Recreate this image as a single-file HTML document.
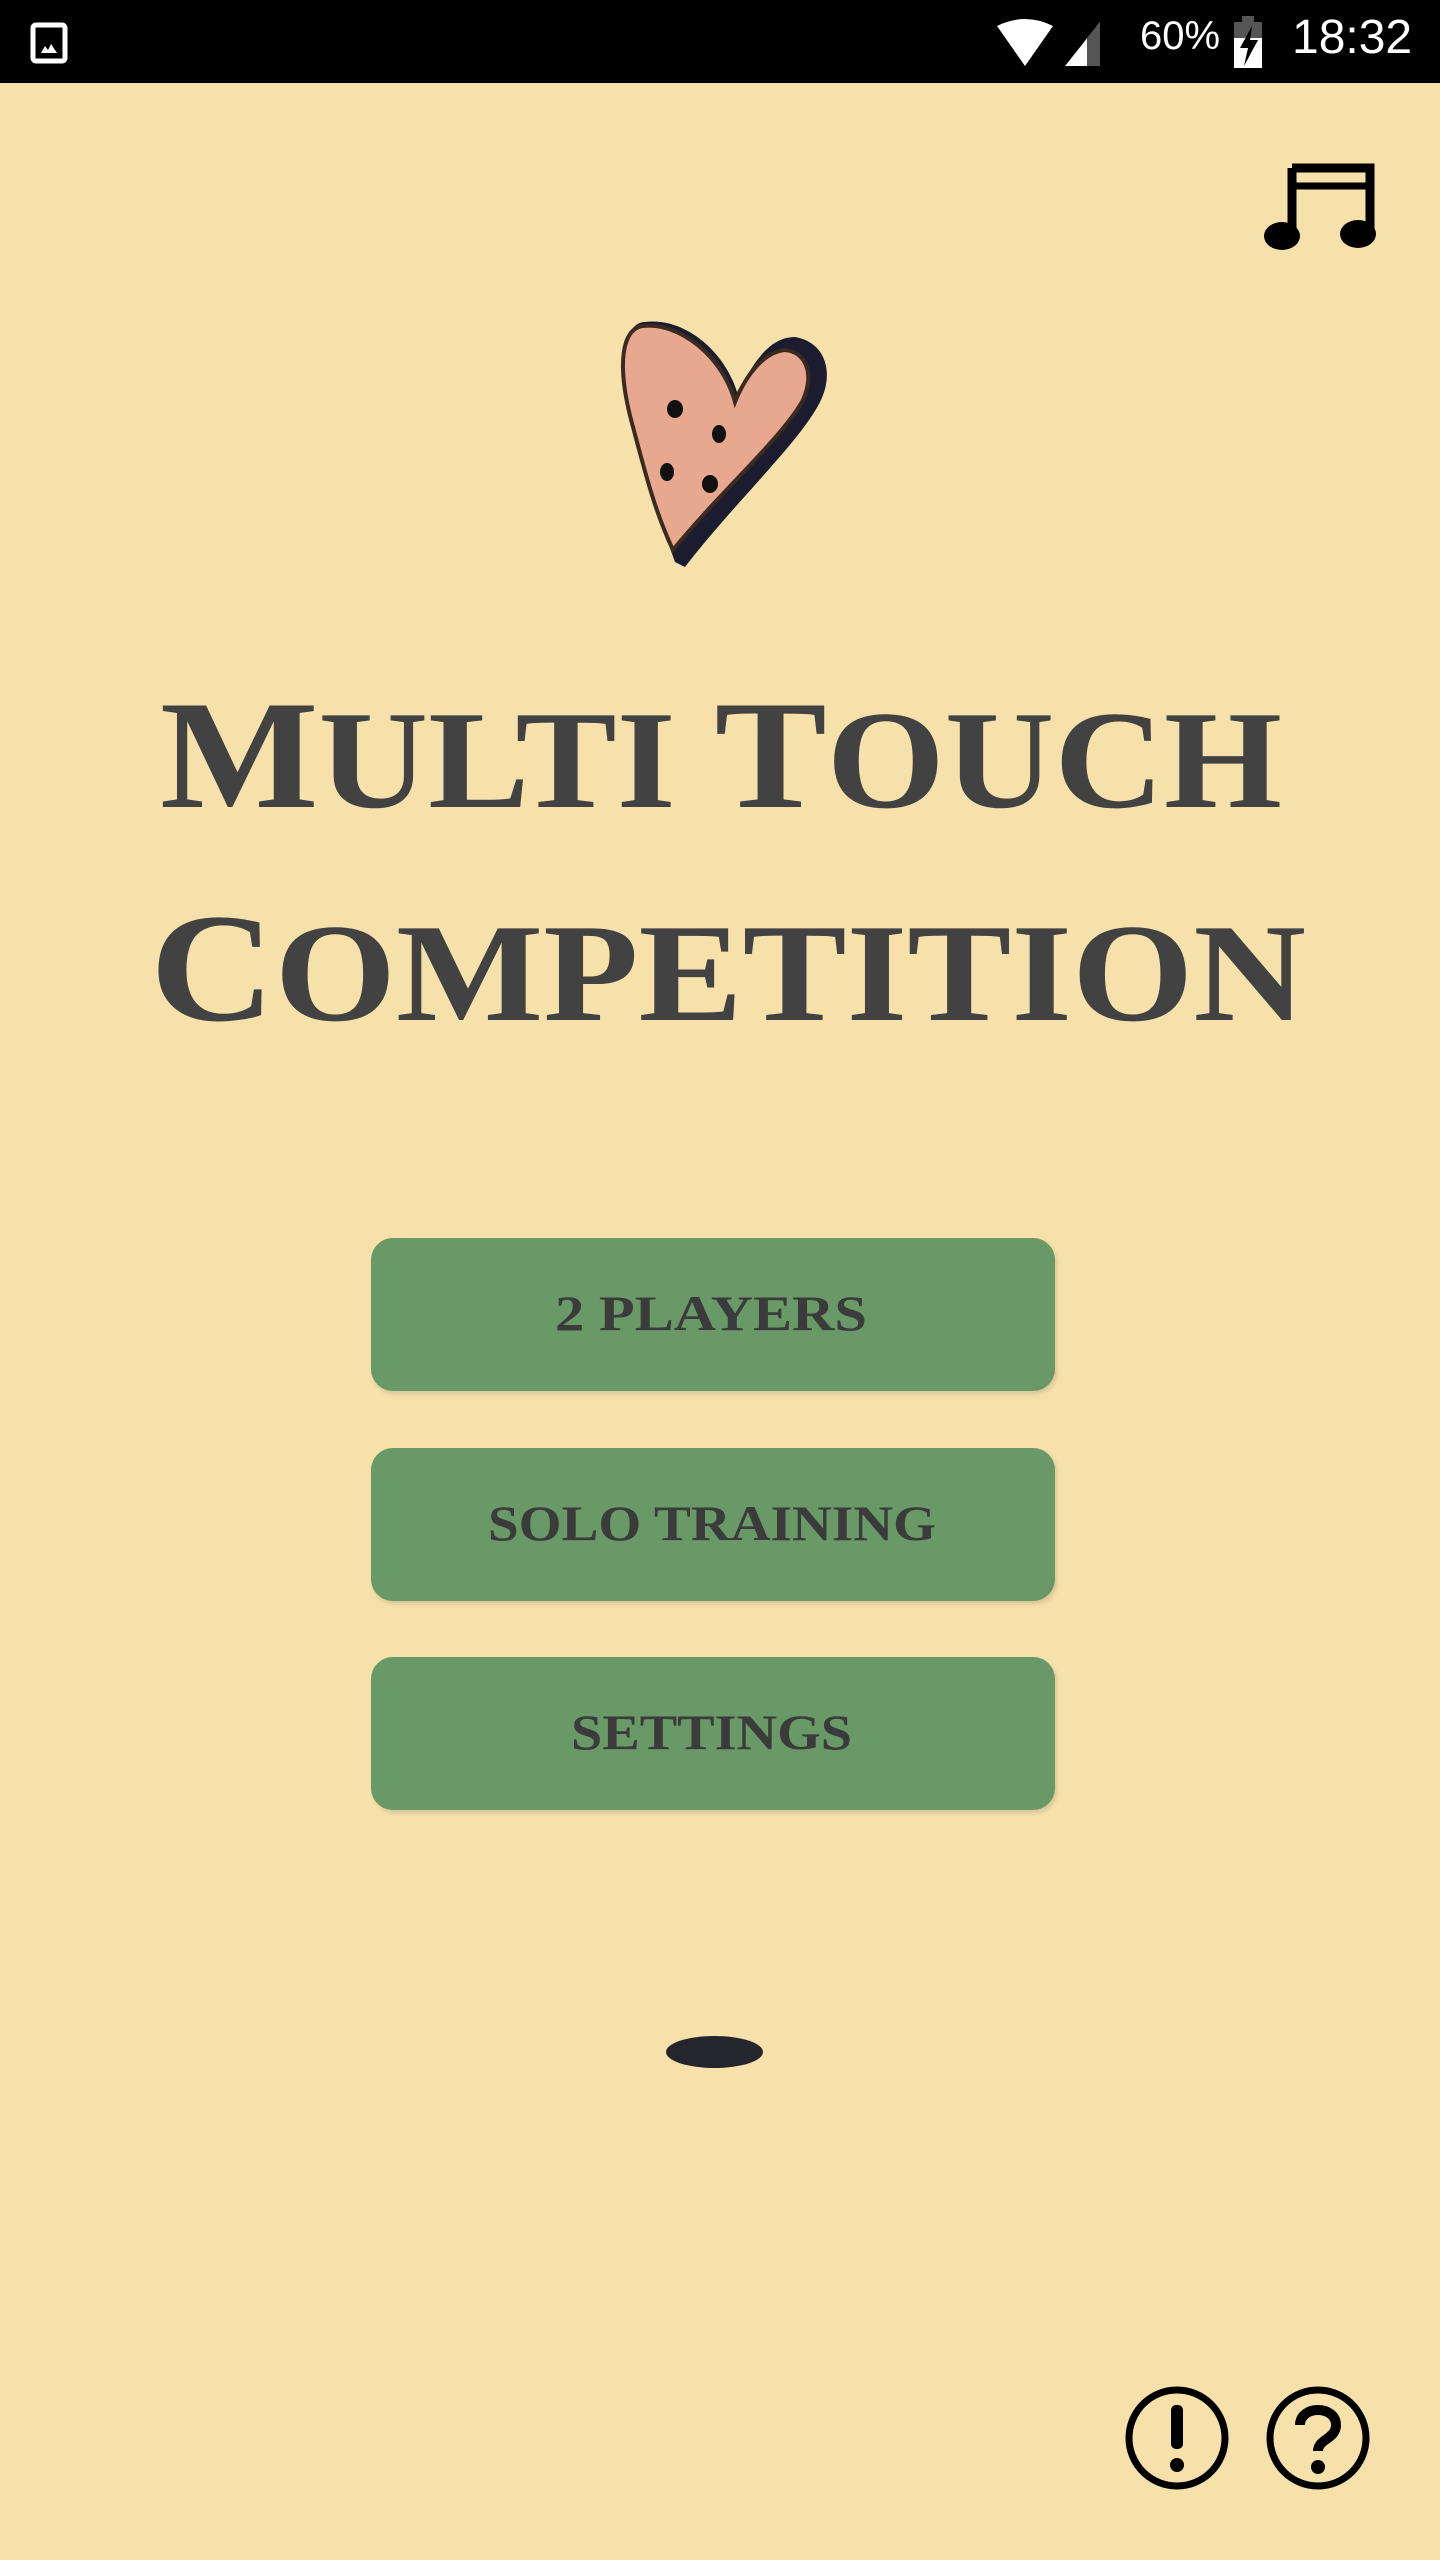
<!DOCTYPE html>
<html><head><meta charset="utf-8"><style>
html,body{margin:0;padding:0}
body{width:1440px;height:2560px;background:#f6e1ab;position:relative;overflow:hidden;font-family:"Liberation Serif",serif}
.sb{position:absolute;left:0;top:0;width:1440px;height:83px;background:#000}
.abs{position:absolute}
.btn{position:absolute;left:371px;width:684px;height:153px;background:#689966;border-radius:22px;box-shadow:2px 3px 4px rgba(0,0,0,0.12)}
</style></head><body>
<div class="sb">
<svg class="abs" style="left:30px;top:22px" width="40" height="42" viewBox="0 0 40 42"><rect x="3" y="3" width="32" height="36" rx="3" fill="none" stroke="#fff" stroke-width="5"/><path d="M11 31 L15 24 L18 28 L21 22 L27 31 Z" fill="#fff"/></svg>
<svg class="abs" style="left:995px;top:18px" width="120" height="50" viewBox="0 0 120 50"><path d="M2 8 Q30 -6 58 8 L30 48 Z" fill="#fff"/><path d="M70 48 L105 4 L105 48 Z" fill="#fff"/><path d="M92 20 L105 4 L105 48 L92 48 Z" fill="#555"/></svg>
<div class="abs" style="left:1140px;top:14px;color:#fff;font:40px 'Liberation Sans',sans-serif">60%</div>
<svg class="abs" style="left:1232px;top:16px" width="34" height="52" viewBox="0 0 34 52"><rect x="10" y="0" width="12" height="6" fill="#555"/><rect x="2" y="6" width="28" height="16" fill="#555"/><rect x="2" y="22" width="28" height="30" fill="#fff"/><path d="M20 10 L8 32 L16 32 L12 50 L26 24 L18 24 Z" fill="#000"/></svg>
<div class="abs" style="left:1292px;top:10px;color:#fff;font:48px 'Liberation Sans',sans-serif">18:32</div>
</div>
<svg class="abs" style="left:1262px;top:160px" width="114" height="94" viewBox="0 0 114 94"><path d="M30 8 L108 8 L108 72" fill="none" stroke="#000" stroke-width="9"/><path d="M30 8 L30 76" stroke="#000" stroke-width="9"/><path d="M34 26 L104 26" stroke="#000" stroke-width="7"/><ellipse cx="20" cy="76" rx="18" ry="14" fill="#000"/><ellipse cx="96" cy="74" rx="18" ry="14" fill="#000"/></svg>
<svg class="abs" style="left:615px;top:312px" width="235" height="265" viewBox="0 0 235 265">
<path d="M30 10 C10 10 -2 50 20 120 C35 170 45 210 60 250 L70 255 C120 190 185 130 205 90 C220 60 210 30 180 25 C150 25 135 60 122 80 C110 40 70 5 30 10 Z" fill="#1c1c30"/>
<path d="M28 14 C8 16 0 50 18 115 C30 160 40 200 58 238 C105 180 168 125 188 88 C200 60 190 40 170 38 C148 40 130 65 120 90 C108 45 65 10 28 14 Z" fill="#e8a890" stroke="#3a2a20" stroke-width="4"/>
<ellipse cx="60" cy="97" rx="8" ry="9" fill="#111"/><ellipse cx="104" cy="122" rx="7" ry="9" fill="#111"/><ellipse cx="52" cy="160" rx="7" ry="9" fill="#111"/><ellipse cx="95" cy="172" rx="8" ry="9" fill="#111"/>
</svg>
<svg class="abs" style="left:0;top:680px" width="1440" height="360" viewBox="0 0 1440 360">
<text x="160" y="127" font-family="Liberation Serif,serif" font-weight="bold" font-size="155" fill="#424242" textLength="1122" lengthAdjust="spacingAndGlyphs">M<tspan font-size="140">ULTI</tspan> T<tspan font-size="140">OUCH</tspan></text>
<text x="150" y="340" font-family="Liberation Serif,serif" font-weight="bold" font-size="155" fill="#424242" textLength="1156" lengthAdjust="spacingAndGlyphs">C<tspan font-size="140">OMPETITION</tspan></text>
</svg>
<div class="btn" style="top:1238px"></div>
<div class="btn" style="top:1448px"></div>
<div class="btn" style="top:1657px"></div>
<svg class="abs" style="left:0;top:1238px" width="1440" height="580" viewBox="0 0 1440 580">
<text x="555" y="92" font-family="Liberation Serif,serif" font-weight="bold" font-size="50" fill="#3b3b3b" textLength="312" lengthAdjust="spacingAndGlyphs">2 PLAYERS</text>
<text x="488" y="302" font-family="Liberation Serif,serif" font-weight="bold" font-size="50" fill="#3b3b3b" textLength="448" lengthAdjust="spacingAndGlyphs">SOLO TRAINING</text>
<text x="571" y="511" font-family="Liberation Serif,serif" font-weight="bold" font-size="50" fill="#3b3b3b" textLength="281" lengthAdjust="spacingAndGlyphs">SETTINGS</text>
</svg>
<div class="abs" style="left:666px;top:2036px;width:97px;height:32px;border-radius:50%;background:#25252e"></div>
<svg class="abs" style="left:1122px;top:2383px" width="252" height="110" viewBox="0 0 252 110">
<circle cx="55" cy="55" r="48" fill="none" stroke="#000" stroke-width="7"/>
<rect x="49" y="22" width="12" height="44" rx="5" fill="#000"/><circle cx="55" cy="82" r="7" fill="#000"/>
<circle cx="196" cy="55" r="48" fill="none" stroke="#000" stroke-width="7"/>
<path d="M178 42 C178 22 214 22 214 42 C214 56 196 56 196 68" fill="none" stroke="#000" stroke-width="10"/><circle cx="196" cy="84" r="7" fill="#000"/>
</svg>
</body></html>
